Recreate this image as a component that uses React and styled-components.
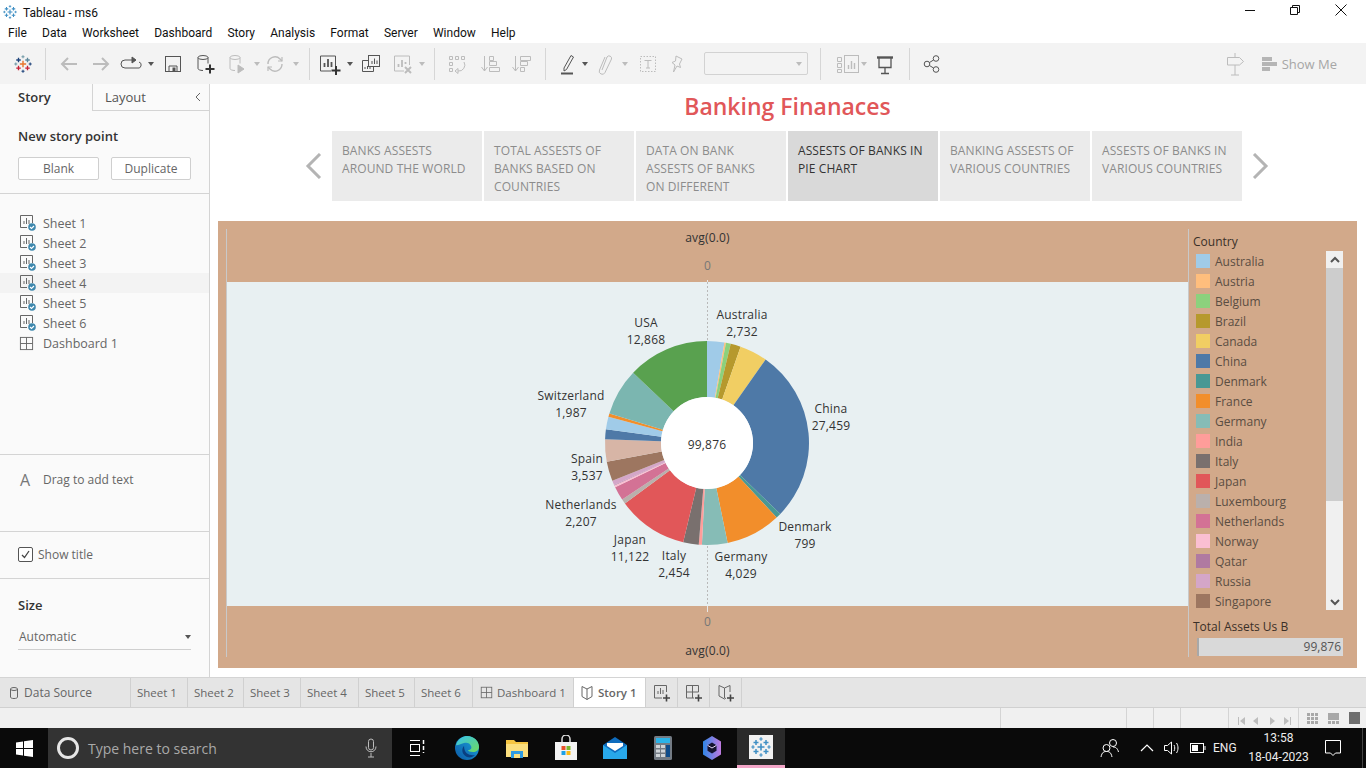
import styled, { createGlobalStyle } from 'styled-components';

const GlobalStyle = createGlobalStyle`
  html, body {
    margin: 0;
    padding: 0;
    width: 1366px;
    height: 768px;
    overflow: hidden;
    background: #fff;
  }
  * { box-sizing: border-box; }
`;

const FONT = '"Open Sans", "Noto Sans", sans-serif';
const WIN_FONT = 'Roboto, "Open Sans", sans-serif';

const SLICES = [
  ['Australia', 2732, '#a0cbe8', true],
  ['Austria', 250, '#ffbe7d', true],
  ['Belgium', 750, '#8cd17d', true],
  ['Brazil', 1600, '#b6992d', true],
  ['Canada', 4400, '#f1ce63', true],
  ['China', 27459, '#4e79a7', true],
  ['Denmark', 799, '#499894', true],
  ['France', 8710, '#f28e2b', true],
  ['Germany', 4029, '#86bcb6', true],
  ['India', 500, '#ff9d9a', true],
  ['Italy', 2454, '#79706e', true],
  ['Japan', 11122, '#e15759', true],
  ['Luxembourg', 750, '#bab0ac', true],
  ['Netherlands', 2207, '#d37295', true],
  ['Norway', 300, '#fabfd2', true],
  ['Qatar', 100, '#b07aa1', true],
  ['Russia', 700, '#d4a6c8', true],
  ['Singapore', 3100, '#9d7660', true],
  ['Spain', 3537, '#d7b5a6', false],
  ['Sweden', 1550, '#4e79a7', false],
  ['Switzerland', 1987, '#a0cbe8', false],
  ['Thailand', 550, '#f28e2b', false],
  ['UK', 7422, '#7bb6b0', false],
  ['USA', 12868, '#59a14f', false],
];

const PIE_LABELS = [
  ['Australia', '2,732', 515, 37],
  ['USA', '12,868', 419, 45],
  ['China', '27,459', 604, 131],
  ['Switzerland', '1,987', 344, 118],
  ['Spain', '3,537', 360, 181],
  ['Netherlands', '2,207', 354, 227],
  ['Japan', '11,122', 403, 262],
  ['Italy', '2,454', 447, 278],
  ['Germany', '4,029', 514, 279],
  ['Denmark', '799', 578, 249],
];

const STORY_POINTS = [
  ['BANKS ASSESTS', 'AROUND THE WORLD'],
  ['TOTAL ASSESTS OF', 'BANKS BASED ON', 'COUNTRIES'],
  ['DATA ON BANK', 'ASSESTS OF BANKS', 'ON DIFFERENT'],
  ['ASSESTS OF BANKS IN', 'PIE CHART'],
  ['BANKING ASSESTS OF', 'VARIOUS COUNTRIES'],
  ['ASSESTS OF BANKS IN', 'VARIOUS COUNTRIES'],
];

const MENU = ['File', 'Data', 'Worksheet', 'Dashboard', 'Story', 'Analysis', 'Format', 'Server', 'Window', 'Help'];
const SHEETS = ['Sheet 1', 'Sheet 2', 'Sheet 3', 'Sheet 4', 'Sheet 5', 'Sheet 6'];
const BOTTOM_SHEETS = [['Sheet 1', 57], ['Sheet 2', 56], ['Sheet 3', 57], ['Sheet 4', 58], ['Sheet 5', 56], ['Sheet 6', 58]];

function polar(r, deg, cx, cy) {
  const a = (deg * Math.PI) / 180;
  return [cx + r * Math.sin(a), cy - r * Math.cos(a)];
}

function arcPath(cx, cy, r0, r1, from, to) {
  const [x1, y1] = polar(r1, from, cx, cy);
  const [x2, y2] = polar(r1, to, cx, cy);
  const [x3, y3] = polar(r0, to, cx, cy);
  const [x4, y4] = polar(r0, from, cx, cy);
  const big = to - from > 180 ? 1 : 0;
  return `M${x1} ${y1}A${r1} ${r1} 0 ${big} 1 ${x2} ${y2}L${x3} ${y3}A${r0} ${r0} 0 ${big} 0 ${x4} ${y4}Z`;
}

function Donut() {
  const total = SLICES.reduce((sum, s) => sum + s[1], 0);
  let at = 0;
  const cx = 480;
  const cy = 161;
  return (
    <PieSvg width="961" height="324" viewBox="0 0 961 324">
      <line x1="480.5" y1="0" x2="480.5" y2="324" stroke="#b9b9b9" strokeDasharray="2 2" />
      {SLICES.map(([name, value, color]) => {
        const from = at;
        at += (value / total) * 360;
        return <path key={name} d={arcPath(cx, cy, 46, 102, from, at)} fill={color} />;
      })}
      <circle cx={cx} cy={cy} r="46" fill="#fff" />
      <text x={cx} y={cy + 6} textAnchor="middle">99,876</text>
      {PIE_LABELS.map(([name, value, x, y]) => (
        <text key={name} x={x} y={y} textAnchor="middle">
          <tspan x={x}>{name}</tspan>
          <tspan x={x} dy="17">{value}</tspan>
        </text>
      ))}
    </PieSvg>
  );
}

function TableauMark({ size = 20, mono }) {
  const c = mono
    ? ['#3f8fc4', '#3f8fc4', '#3f8fc4', '#3f8fc4', '#3f8fc4']
    : ['#e8762d', '#1f447b', '#c72035', '#5b879b', '#7099a6'];
  const cross = (x, y, r, color, w = 1.5) => (
    <path d={`M${x - r} ${y}H${x + r}M${x} ${y - r}V${y + r}`} stroke={color} strokeWidth={w} fill="none" />
  );
  return (
    <svg width={size} height={size} viewBox="0 0 20 20">
      {cross(10, 10, 3.5, c[0], 1.6)}
      {cross(5, 5.5, 2.5, c[1])}
      {cross(15, 14.5, 2.5, c[2])}
      {cross(15, 5.5, 2.5, c[3])}
      {cross(5, 14.5, 2.5, c[2])}
      {cross(10, 2, 1.7, c[4], 1.2)}
      {cross(10, 18, 1.7, c[1], 1.2)}
      {cross(2, 10, 1.7, c[4], 1.2)}
      {cross(18, 10, 1.7, c[1], 1.2)}
    </svg>
  );
}

function Ico({ w = 20, h = 20, off, children }) {
  return (
    <Glyph width={w} height={h} viewBox={`0 0 ${w} ${h}`} $off={off}>
      {children}
    </Glyph>
  );
}

const Plus = ({ x, y }) => <path d={`M${x - 4.5} ${y}H${x + 4.5}M${x} ${y - 4.5}V${y + 4.5}`} stroke="#333" strokeWidth="2" />;

const icons = {
  back: () => <Ico off><path d="M18 10H3M9 4l-6 6 6 6" strokeWidth="2" /></Ico>,
  forward: () => <Ico off><path d="M2 10h15M11 4l6 6-6 6" strokeWidth="2" /></Ico>,
  loop: () => (
    <Ico><path d="M14 6H4a2.5 2.5 0 0 0 0 8h12a2.5 2.5 0 0 0 2-6" /><path d="M11 3l4 3-4 3z" fill="currentColor" /></Ico>
  ),
  save: () => (
    <Ico><rect x="2.5" y="2.5" width="15" height="15" /><path d="M6 17v-5h8v5" /><rect x="10" y="14" width="2" height="3" fill="currentColor" /></Ico>
  ),
  dataAdd: () => (
    <Ico w={22} h={22}>
      <ellipse cx="9" cy="4.5" rx="5" ry="2" />
      <path d="M4 4.5v11c0 1 2 2 5 2M14 4.5v6" />
      <Plus x={16} y={16} />
    </Ico>
  ),
  dataPause: () => (
    <Ico w={22} h={22} off>
      <ellipse cx="9" cy="4.5" rx="5" ry="2" />
      <path d="M4 4.5v11c0 1 2 2 5 2M14 4.5v6" />
      <path d="M12 12l6 4-6 4z" fill="currentColor" />
    </Ico>
  ),
  refresh: () => (
    <Ico off>
      <path d="M3 10a7 7 0 0 1 12-5l2 2M17 10a7 7 0 0 1-12 5l-2-2" strokeWidth="1.4" />
      <path d="M17 3v4h-4M3 17v-4h4" strokeWidth="1.2" />
    </Ico>
  ),
  newSheet: () => (
    <Ico w={24} h={22}>
      <path d="M13 18H2.5V3h15v10" />
      <path d="M6.5 14V10M10 14V6M13.5 14V9" strokeWidth="1.8" />
      <Plus x={18} y={17.5} />
    </Ico>
  ),
  dupSheet: () => (
    <Ico w={20} h={20}>
      <rect x="7.5" y="1.5" width="11" height="11" />
      <path d="M7.5 6.5h-6v11h11v-5" />
      <path d="M11 10V7M13.5 10V4.5M16 10V6.5M4 15v-2M6.5 15v-3M9 15v-2" />
    </Ico>
  ),
  clearSheet: () => (
    <Ico w={22} h={22} off>
      <path d="M12 18H2.5V3h15v9" />
      <path d="M6.5 14v-3M10 14V7M13.5 11V9" strokeWidth="1.8" />
      <path d="M13 14l6 6M19 14l-6 6" strokeWidth="2" />
    </Ico>
  ),
  swap: () => (
    <Ico off>
      <path d="M2.5 2.5h3v3h-3zM8.5 2.5h3v3h-3zM14.5 2.5h3v3h-3zM2.5 8.5h3v3h-3zM2.5 14.5h3v3h-3z" />
      <path d="M17 8a6 6 0 0 1-6 9M8 17l3 2.5v-5z" />
    </Ico>
  ),
  sortUp: () => (
    <Ico off>
      <path d="M4.5 2v15M1.5 13l3 4 3-4" />
      <path d="M9.5 2.5h4v4h-4zM9.5 7.5h7v4h-7zM9.5 13.5h10v4h-10z" />
    </Ico>
  ),
  sortDown: () => (
    <Ico off>
      <path d="M4.5 2v15M1.5 13l3 4 3-4" />
      <path d="M9.5 2.5h10v4h-10zM9.5 7.5h7v4h-7zM9.5 13.5h4v4h-4z" />
    </Ico>
  ),
  pen: () => (
    <Ico w={18} h={22}>
      <path d="M5 15L12 2.5l2.5 1.5L7.5 16.5 5 18z" />
      <path d="M2 20.5h12" strokeWidth="2" />
    </Ico>
  ),
  clip: () => (
    <Ico w={18} h={22} off>
      <path d="M6 17L11 4a2.5 2.5 0 0 1 4.5 2L9 19.5a3 3 0 0 1-5.5-2.5L9 4" />
    </Ico>
  ),
  textBox: () => (
    <Ico w={20} h={20} off>
      <rect x="2.5" y="2.5" width="15" height="15" strokeDasharray="1.5 1.5" />
      <path d="M6.5 6.5h7M10 6.5V14M8 14h4" />
    </Ico>
  ),
  pin: () => (
    <Ico w={18} h={22} off><path d="M8 3l6 3-2.5 5 1 3.5L9 13l-3.5 6 1.5-7L4 9.5l3.5-1.5z" /></Ico>
  ),
  labels: () => (
    <Ico w={26} h={22} off>
      <path d="M2.5 4.5h4v4h-4zM2.5 10.5h4v4h-4zM2.5 16.5h4v3h-4z" />
      <rect x="9.5" y="2.5" width="14" height="17" />
      <path d="M13.5 16v-4M16.5 16V8M19.5 16v-6" strokeWidth="1.4" />
    </Ico>
  ),
  screen: () => (
    <Ico w={20} h={22}>
      <path d="M2 4.5h16" strokeWidth="2.4" />
      <path d="M4 4.5v10h12v-10M10 14.5V20M6 20.5h8" strokeWidth="1.3" />
    </Ico>
  ),
  share: () => (
    <Ico w={18} h={20}>
      <circle cx="4" cy="10" r="2.8" /><circle cx="13" cy="4.5" r="2.8" /><circle cx="13" cy="15.5" r="2.8" />
      <path d="M6.5 8.5l4-2.5M6.5 11.5l4 2.5" />
    </Ico>
  ),
  sign: () => (
    <Ico w={20} h={24} off>
      <path d="M10 1v4M10 13v10M6 23h8" />
      <path d="M2.5 5.5h12l4 4-4 3.5h-12z" />
    </Ico>
  ),
};

const ToolIcon = ({ name }) => icons[name]();

const TOOLBAR = [
  { kind: 'logo', w: 30 },
  { kind: 'sep', l: 7, r: 7 },
  { icon: 'back', w: 32 },
  { icon: 'forward', w: 32 },
  { icon: 'loop', w: 28 },
  { kind: 'caret', w: 12 },
  { icon: 'save', w: 32 },
  { icon: 'dataAdd', w: 32 },
  { icon: 'dataPause', w: 32 },
  { kind: 'caret', w: 8, off: true },
  { icon: 'refresh', w: 28 },
  { kind: 'caret', w: 14, off: true },
  { kind: 'sep', l: 6, r: 4 },
  { icon: 'newSheet', w: 32 },
  { kind: 'caret', w: 8 },
  { icon: 'dupSheet', w: 34 },
  { icon: 'clearSheet', w: 30 },
  { kind: 'caret', w: 8, off: true },
  { kind: 'sep', l: 8, r: 6 },
  { icon: 'swap', w: 32 },
  { icon: 'sortUp', w: 34 },
  { icon: 'sortDown', w: 28 },
  { kind: 'sep', l: 10, r: 9 },
  { icon: 'pen', w: 26 },
  { kind: 'caret', w: 8 },
  { icon: 'clip', w: 32 },
  { kind: 'caret', w: 8, off: true },
  { icon: 'textBox', w: 38 },
  { icon: 'pin', w: 20 },
  { kind: 'select' },
  { kind: 'sep', l: 12, r: 12 },
  { icon: 'labels', w: 30 },
  { kind: 'caret', w: 2, off: true },
  { icon: 'screen', w: 40 },
  { kind: 'sep', l: 4, r: 8 },
  { icon: 'share', w: 28 },
];

function Toolbar() {
  return (
    <ToolbarRow>
      {TOOLBAR.map((item, i) => {
        if (item.kind === 'sep') return <ToolSep key={i} $l={item.l} $r={item.r} />;
        if (item.kind === 'select') return <FitSelect key={i}><Caret $off /></FitSelect>;
        if (item.kind === 'caret') return <Slot key={i} $w={item.w}><Caret $off={item.off} /></Slot>;
        if (item.kind === 'logo') return <Slot key={i} $w={item.w}><TableauMark size={18} /></Slot>;
        return <Slot key={i} $w={item.w}><ToolIcon name={item.icon} /></Slot>;
      })}
      <RightTools>
        <ToolIcon name="sign" />
        <ShowMe>
          <ShowMeBars><i /><i /><i /></ShowMeBars>
          Show Me
        </ShowMe>
      </RightTools>
    </ToolbarRow>
  );
}

function SheetIcon() {
  return (
    <svg width="18" height="18" viewBox="0 0 18 18" fill="none">
      <path d="M13.5 9V1.5h-12v12H8" stroke="#666" />
      <path d="M5 10V7M7.5 10V4M10 10V6" stroke="#666" />
      <circle cx="13" cy="13" r="3.8" fill="#3d87ad" />
      <path d="M11 13l1.5 1.5 2.5-2.5" stroke="#fff" strokeWidth="1.1" />
    </svg>
  );
}

function DashIcon({ size = 15 }) {
  return (
    <svg width={size} height={size} viewBox="0 0 16 16" fill="none" stroke="#666">
      <rect x="1.5" y="1.5" width="13" height="13" />
      <path d="M1.5 8h13M8 1.5v13" />
    </svg>
  );
}

function Sidebar() {
  return (
    <Side>
      <SideTabs>
        <SideTab $active>Story</SideTab>
        <SideTab>
          Layout
          <svg width="8" height="10" viewBox="0 0 8 10" fill="none" stroke="#666"><path d="M6 1L2 5l4 4" /></svg>
        </SideTab>
      </SideTabs>
      <NewPoint>
        <SideHead>New story point</SideHead>
        <PointButtons>
          <PointButton $w={81}>Blank</PointButton>
          <PointButton $w={80}>Duplicate</PointButton>
        </PointButtons>
      </NewPoint>
      <SheetList>
        {SHEETS.map((s) => (
          <SheetRow key={s} $hover={s === 'Sheet 4'}>
            <RowIcon><SheetIcon /></RowIcon>
            {s}
          </SheetRow>
        ))}
        <SheetRow>
          <RowIcon><DashIcon /></RowIcon>
          Dashboard 1
        </SheetRow>
      </SheetList>
      <DragText>
        <BigA>A</BigA>
        Drag to add text
      </DragText>
      <TitleCheck>
        <CheckBox>
          <svg width="11" height="11" viewBox="0 0 11 11" fill="none" stroke="#444" strokeWidth="1.3"><path d="M2 6l2.5 2.5L9 2" /></svg>
        </CheckBox>
        Show title
      </TitleCheck>
      <SizeBlock>
        <SideHead>Size</SideHead>
        <SizeSelect>
          Automatic
          <Caret />
        </SizeSelect>
      </SizeBlock>
    </Side>
  );
}

function Chevron({ flip }) {
  return (
    <ChevronBox>
      <svg width="18" height="26" viewBox="0 0 18 26" fill="none" stroke="#b4b4b4" strokeWidth="3">
        <path d={flip ? 'M3 1l12 12L3 25' : 'M15 1L3 13l12 12'} />
      </svg>
    </ChevronBox>
  );
}

function Legend() {
  return (
    <LegendCol>
      <LegendTitle>Country</LegendTitle>
      <LegendBody>
        <LegendList>
          {SLICES.filter((s) => s[3]).map(([name, , color]) => (
            <LegendRow key={name}>
              <Swatch $c={color} />
              {name}
            </LegendRow>
          ))}
        </LegendList>
        <ScrollTrack>
          <ScrollBtn>
            <svg width="10" height="8" viewBox="0 0 10 8" fill="none" stroke="#555" strokeWidth="2"><path d="M1 6l4-4 4 4" /></svg>
          </ScrollBtn>
          <ScrollThumb />
          <ScrollBtn $end>
            <svg width="10" height="8" viewBox="0 0 10 8" fill="none" stroke="#555" strokeWidth="2"><path d="M1 2l4 4 4-4" /></svg>
          </ScrollBtn>
        </ScrollTrack>
      </LegendBody>
      <LegendTitle $tight>Total Assets Us B</LegendTitle>
      <TotalBar>99,876</TotalBar>
    </LegendCol>
  );
}

function StoryArea() {
  return (
    <MainArea>
      <StoryTitle>Banking Finanaces</StoryTitle>
      <StoryNav>
        <Chevron />
        <PointRow>
          {STORY_POINTS.map((lines, i) => (
            <Point key={i} $active={i === 3}>
              {lines.map((line) => <PointLine key={line}>{line}</PointLine>)}
            </Point>
          ))}
        </PointRow>
        <Chevron flip />
      </StoryNav>
      <Dash>
        <ChartCol>
          <AxisBand $top>
            <AxisTitle>avg(0.0)</AxisTitle>
            <AxisZero $top>0</AxisZero>
            <AxisTick />
          </AxisBand>
          <Plot><Donut /></Plot>
          <AxisBand>
            <AxisTick />
            <AxisZero>0</AxisZero>
            <AxisTitle>avg(0.0)</AxisTitle>
          </AxisBand>
        </ChartCol>
        <Legend />
      </Dash>
    </MainArea>
  );
}

function BookIcon() {
  return (
    <svg width="14" height="16" viewBox="0 0 14 16" fill="none" stroke="#666">
      <path d="M7 4L2 1.5v10L7 14.5l5-3v-10zM7 4v10.5" />
    </svg>
  );
}

function NewTabIcon({ kind }) {
  return (
    <svg width="20" height="20" viewBox="0 0 20 20" fill="none" stroke="#666">
      {kind === 'sheet' && <path d="M10 15H2.5V2.5h12V9M6 11V8M8.5 11V5M11 11V7" />}
      {kind === 'dash' && <path d="M10 15H2.5V2.5h12V9M2.5 9h12M8.5 2.5V15" />}
      {kind === 'story' && <path d="M8.5 5L3 2.5V13l5.5 3 1.5-1M8.5 5v10M8.5 5L14 2.5V9" />}
      <path d="M11 15h7M14.5 11.5v7" stroke="#444" strokeWidth="1.6" />
    </svg>
  );
}

function TabStrip() {
  return (
    <Tabs>
      <Tab $w={131} $pad={9}>
        <svg width="10" height="14" viewBox="0 0 10 14" fill="none" stroke="#666">
          <ellipse cx="5" cy="3" rx="3.5" ry="1.5" />
          <path d="M1.5 3v8c0 1 1.5 1.5 3.5 1.5S8.5 12 8.5 11V3" />
        </svg>
        <DataSourceLabel>Data Source</DataSourceLabel>
      </Tab>
      {BOTTOM_SHEETS.map(([s, w]) => (
        <Tab key={s} $w={w} $pad={6}>{s}</Tab>
      ))}
      <Tab $w={101} $pad={7}>
        <DashIcon size={13} />
        Dashboard 1
      </Tab>
      <Tab $w={72} $pad={6} $active>
        <BookIcon />
        Story 1
      </Tab>
      <Tab $w={32} $center><NewTabIcon kind="sheet" /></Tab>
      <Tab $w={32} $center><NewTabIcon kind="dash" /></Tab>
      <Tab $w={32} $center><NewTabIcon kind="story" /></Tab>
    </Tabs>
  );
}

function StatusBar() {
  return (
    <Status>
      <StatusCell $w={126} />
      <StatusCell $w={27} />
      <StatusCell $w={27} />
      <StatusCell $w={48} />
      <StatusCell $w={70}>
        <PageNav>
          <svg width="58" height="10" viewBox="0 0 58 10" fill="#bdbdbd">
            <path d="M1 1h1v8H1zM8 1v8L3 5zM21 1v8l-5-4zM33 1v8l5-4zM47 1v8l5-4zM53 1h1v8h-1z" />
          </svg>
        </PageNav>
      </StatusCell>
      <StatusViews>
        <svg width="11" height="11" viewBox="0 0 11 11" fill="#a8a8a8">
          <path d="M0 0h3v3H0zM4 0h3v3H4zM8 0h3v3H8zM0 4h3v3H0zM4 4h3v3H4zM8 4h3v3H8zM0 8h3v3H0zM4 8h3v3H4zM8 8h3v3H8z" />
        </svg>
        <svg width="11" height="11" viewBox="0 0 11 11" fill="#a8a8a8">
          <path d="M0 0h11v7H0zM0 8h3v3H0zM4 8h3v3H4zM8 8h3v3H8z" />
        </svg>
        <svg width="11" height="12" viewBox="0 0 11 12" fill="#6e6e6e"><path d="M0 0h11v12H0z" /></svg>
      </StatusViews>
    </Status>
  );
}

const TASK_ICONS = {
  view: (
    <svg width="16" height="18" viewBox="0 0 16 18" fill="none" stroke="#fff">
      <path d="M1 1.5h10M1 16.5h10" />
      <rect x="1.5" y="5.5" width="9" height="7" />
      <path d="M14.5 1v4M14.5 7v4M14.5 13v1" strokeWidth="1.5" />
    </svg>
  ),
  edge: (
    <svg width="26" height="26" viewBox="0 0 26 26">
      <defs>
        <linearGradient id="edgeA" x1="0" y1="1" x2="1" y2="0">
          <stop offset="0" stopColor="#0c59a4" />
          <stop offset="1" stopColor="#1ba5df" />
        </linearGradient>
        <linearGradient id="edgeB" x1="0" y1="0" x2="1" y2="1">
          <stop offset="0" stopColor="#35c1f1" />
          <stop offset="1" stopColor="#6fdc5c" />
        </linearGradient>
      </defs>
      <circle cx="13" cy="13" r="12" fill="url(#edgeA)" />
      <path d="M2 10C4 3 10 1 13 1c7 0 12 5 12 11 0 3-3 5-6 5s-5-1-5-2c3 0 4-2 3-4-1-3-4-4-7-3-4 1-7 3-8 2z" fill="url(#edgeB)" />
      <path d="M10 11c-3 3-2 9 3 11 3 1 6 0 8-2-5 1-11-1-11-9z" fill="#0a3f80" />
    </svg>
  ),
  folder: (
    <svg width="24" height="22" viewBox="0 0 24 22">
      <path d="M1 3h8l2 2h12v15H1z" fill="#f5c542" />
      <path d="M1 7h22v13H1z" fill="#fbdf7e" />
      <path d="M6 14h12v7H6z" fill="#2f9be0" />
      <path d="M9 17h6v4H9z" fill="#fbdf7e" />
    </svg>
  ),
  store: (
    <svg width="24" height="26" viewBox="0 0 24 26">
      <path d="M8 7V4a4 4 0 0 1 8 0v3" fill="none" stroke="#ddd" strokeWidth="1.5" />
      <path d="M1 7h22v18H1z" fill="#f3f3f3" />
      <path d="M7.5 11h4v4h-4z" fill="#e8512a" />
      <path d="M12.5 11h4v4h-4z" fill="#7cb82f" />
      <path d="M7.5 16h4v4h-4z" fill="#1ea1e6" />
      <path d="M12.5 16h4v4h-4z" fill="#fab915" />
    </svg>
  ),
  mail: (
    <svg width="26" height="24" viewBox="0 0 26 24">
      <path d="M1 9L13 1l12 8v14H1z" fill="#0f6cbd" />
      <path d="M1 9l12 8 12-8v14H1z" fill="#28a8ea" />
      <path d="M5 7h16v3l-8 5-8-5z" fill="#fff" />
    </svg>
  ),
  calc: (
    <svg width="20" height="26" viewBox="0 0 20 26">
      <rect x="1" y="1" width="18" height="24" rx="1.5" fill="#737b84" />
      <rect x="3" y="3" width="14" height="5" fill="#2bb3e8" />
      <path d="M3 10h4v3H3zM8 10h4v3H8zM3 14.5h4v3H3zM8 14.5h4v3H8zM3 19h4v3H3zM8 19h4v3H8z" fill="#cfd4d8" />
      <path d="M13 10h4v12h-4z" fill="#0f4c8a" />
    </svg>
  ),
  hex: (
    <svg width="22" height="26" viewBox="0 0 22 26">
      <defs>
        <linearGradient id="hexA" x1="0" y1="0" x2="1" y2="0">
          <stop offset="0" stopColor="#2f86e6" />
          <stop offset="1" stopColor="#c07be0" />
        </linearGradient>
      </defs>
      <path d="M11 1l9 5.5v13L11 25l-9-5.5v-13z" fill="url(#hexA)" />
      <path d="M11 7.5l4.5 2.8v5.4L11 18.5l-4.5-2.8v-5.4z" fill="#14142e" />
      <path d="M6.5 10.3L11 13l4.5-2.7" fill="none" stroke="#e7d9f7" />
    </svg>
  ),
};

function Taskbar() {
  return (
    <Task>
      <StartBtn>
        <svg width="17" height="17" viewBox="0 0 17 17" fill="#fff">
          <path d="M0 2.5l7-1V8H0zM8 1.3L17 0v8H8zM0 9h7v6.500l-7-1zM8 9h9v8l-9-1.300z" />
        </svg>
      </StartBtn>
      <SearchBox>
        <CortanaRing />
        <SearchText>Type here to search</SearchText>
        <svg width="12" height="20" viewBox="0 0 12 20" fill="none" stroke="#bdbdbd">
          <rect x="3.5" y="1" width="5" height="11" rx="2.5" />
          <path d="M1 8.5c0 7 10 7 10 0M6 15v4M3 19h6" />
        </svg>
      </SearchBox>
      <TaskApp $w={50}>{TASK_ICONS.view}</TaskApp>
      <TaskApp $w={50}>{TASK_ICONS.edge}</TaskApp>
      <TaskApp $w={49}>{TASK_ICONS.folder}</TaskApp>
      <TaskApp $w={49}>{TASK_ICONS.store}</TaskApp>
      <TaskApp $w={49}>{TASK_ICONS.mail}</TaskApp>
      <TaskApp $w={48}>{TASK_ICONS.calc}</TaskApp>
      <TaskApp $w={50}>{TASK_ICONS.hex}</TaskApp>
      <ActiveApp>
        <AppTile><TableauMark size={20} mono /></AppTile>
      </ActiveApp>
      <Tray>
        <svg width="20" height="22" viewBox="0 0 20 22" fill="none" stroke="#fff">
          <circle cx="13" cy="6" r="3.5" />
          <circle cx="6.5" cy="11" r="3.5" />
          <path d="M1 20c1-5 3-5.5 5.5-5.5S11 15 12 20M13 10c2.5 0 4.5 1 5.5 5" />
        </svg>
        <TrayArrow>
          <svg width="14" height="8" viewBox="0 0 14 8" fill="none" stroke="#fff" strokeWidth="1.2"><path d="M1 7l6-6 6 6" /></svg>
        </TrayArrow>
        <svg width="18" height="16" viewBox="0 0 18 16" fill="none" stroke="#fff">
          <path d="M1.5 5.5h3L8.5 2v12l-4-3.5h-3z" />
          <path d="M11 5c1 2 1 4 0 6M13.5 3c2 3 2 7 0 10" />
        </svg>
        <svg width="16" height="10" viewBox="0 0 16 10" fill="none" stroke="#fff">
          <rect x="0.5" y="0.5" width="13" height="9" />
          <rect x="2" y="2" width="6" height="6" fill="#fff" stroke="none" />
          <path d="M15 3v4" />
        </svg>
        <TrayText>ENG</TrayText>
        <Clock>
          <span>13:58</span>
          <span>18-04-2023</span>
        </Clock>
        <svg width="18" height="18" viewBox="0 0 18 18" fill="none" stroke="#fff">
          <path d="M1.5 1.5h15V14h-5L9 16.5 6.5 14h-5z" />
        </svg>
        <ShowDesktop />
      </Tray>
    </Task>
  );
}

export default function App() {
  return (
    <>
      <GlobalStyle />
      <Window>
        <TitleBar>
          <TitleIcon><TableauMark size={14} mono /></TitleIcon>
          <WinTitle>Tableau - ms6</WinTitle>
          <WinControls>
            <svg width="10" height="10" viewBox="0 0 10 10" stroke="#111"><path d="M0 5.5h10" /></svg>
            <svg width="12" height="12" viewBox="0 0 12 12" fill="none" stroke="#111"><path d="M1.5 3.5h7v7h-7zM3.5 3.5v-2h7v7h-2" /></svg>
            <svg width="12" height="12" viewBox="0 0 12 12" fill="none" stroke="#111"><path d="M.5.5l11 11M11.500.5l-11 11" /></svg>
          </WinControls>
        </TitleBar>
        <MenuBar>
          {MENU.map((m) => <MenuItem key={m}>{m}</MenuItem>)}
        </MenuBar>
        <Toolbar />
        <Workspace>
          <Sidebar />
          <StoryArea />
        </Workspace>
        <TabStrip />
        <StatusBar />
        <Taskbar />
      </Window>
    </>
  );
}

const Window = styled.div`
  width: 1366px;
  height: 768px;
  display: flex;
  flex-direction: column;
  font-family: ${FONT};
  font-size: 12px;
  color: #555;
  overflow: hidden;
`;

const TitleBar = styled.div`
  height: 22px;
  display: flex;
  align-items: center;
  padding-left: 3px;
  background: #fff;
`;

const TitleIcon = styled.div`
  width: 14px;
  height: 14px;
  margin-top: 1px;
`;

const WinTitle = styled.div`
  margin: 3px 0 0 6px;
  font-family: ${WIN_FONT};
  font-size: 12px;
  color: #111;
`;

const WinControls = styled.div`
  margin-left: auto;
  width: 102px;
  margin-right: 19px;
  display: flex;
  align-items: center;
  justify-content: space-between;
  margin-top: -2px;
`;

const MenuBar = styled.div`
  height: 21px;
  display: flex;
  align-items: center;
  gap: 15.2px;
  padding-left: 8px;
  background: #fff;
`;

const MenuItem = styled.span`
  font-family: ${WIN_FONT};
  font-size: 12px;
  color: #111;
`;

const ToolbarRow = styled.div`
  height: 41px;
  display: flex;
  align-items: center;
  padding-left: 8px;
  background: #f3f3f3;
`;

const Slot = styled.div`
  width: ${(p) => p.$w}px;
  height: 24px;
  flex: none;
  display: flex;
  align-items: center;
  justify-content: center;
`;

const Glyph = styled.svg`
  fill: none;
  stroke: currentColor;
  color: ${(p) => (p.$off ? '#bcbcbc' : '#555')};
  overflow: visible;
  flex: none;
`;

const ToolSep = styled.div`
  width: 1px;
  height: 32px;
  flex: none;
  background: #d6d6d6;
  margin: 0 ${(p) => p.$r}px 0 ${(p) => p.$l}px;
`;

const Caret = styled.span`
  display: inline-block;
  flex: none;
  width: 0;
  height: 0;
  border-left: 3.5px solid transparent;
  border-right: 3.5px solid transparent;
  border-top: 4px solid ${(p) => (p.$off ? '#bcbcbc' : '#555')};
`;

const FitSelect = styled.div`
  width: 104px;
  height: 23px;
  flex: none;
  margin-left: 17px;
  display: flex;
  align-items: center;
  justify-content: flex-end;
  padding-right: 5px;
  border: 1px solid #d2d2d2;
  border-radius: 2px;
`;

const RightTools = styled.div`
  margin-left: auto;
  padding-right: 29px;
  display: flex;
  align-items: center;
  gap: 17px;
`;

const ShowMe = styled.div`
  display: flex;
  align-items: center;
  gap: 5px;
  font-size: 13px;
  color: #a6a6a6;
`;

const ShowMeBars = styled.div`
  display: flex;
  flex-direction: column;
  gap: 1px;
  i {
    display: block;
    height: 4px;
    background: #b5b5b5;
  }
  i:nth-child(1) { width: 10px; }
  i:nth-child(2) { width: 15px; }
  i:nth-child(3) { width: 8px; }
`;

const Workspace = styled.div`
  height: 593px;
  display: flex;
  background: #fff;
`;

const Side = styled.aside`
  width: 210px;
  flex: none;
  display: flex;
  flex-direction: column;
  background: #fafafa;
  border-right: 1px solid #d4d4d4;
`;

const SideTabs = styled.div`
  height: 27px;
  display: flex;
`;

const SideTab = styled.div`
  width: ${(p) => (p.$active ? '92px' : 'auto')};
  flex: ${(p) => (p.$active ? 'none' : '1')};
  display: flex;
  align-items: center;
  justify-content: space-between;
  padding: 0 7px 1px ${(p) => (p.$active ? '18px' : '12px')};
  font-size: 13px;
  font-weight: ${(p) => (p.$active ? 600 : 400)};
  color: ${(p) => (p.$active ? '#333' : '#555')};
  border-left: ${(p) => (p.$active ? 'none' : '1px solid #d4d4d4')};
  border-bottom: ${(p) => (p.$active ? 'none' : '1px solid #d4d4d4')};
`;

const NewPoint = styled.div`
  height: 83px;
  flex: none;
  padding: 16px 18px 0;
  border-bottom: 1px solid #d4d4d4;
`;

const SideHead = styled.div`
  height: 18px;
  line-height: 18px;
  font-size: 13px;
  font-weight: 600;
  color: #333;
`;

const PointButtons = styled.div`
  display: flex;
  gap: 12px;
  margin-top: 12px;
`;

const PointButton = styled.div`
  width: ${(p) => p.$w}px;
  height: 23px;
  display: flex;
  align-items: center;
  justify-content: center;
  background: #fff;
  border: 1px solid #cfcfcf;
  border-radius: 2px;
  font-size: 12px;
  color: #666;
`;

const SheetList = styled.div`
  height: 261px;
  flex: none;
  padding-top: 19px;
  border-bottom: 1px solid #d4d4d4;
`;

const SheetRow = styled.div`
  height: 20px;
  display: flex;
  align-items: center;
  padding-left: 19px;
  font-size: 12.5px;
  color: #666;
  background: ${(p) => (p.$hover ? '#f3f3f3' : 'transparent')};
`;

const RowIcon = styled.span`
  width: 24px;
  flex: none;
  display: flex;
  align-items: center;
`;

const DragText = styled.div`
  height: 77px;
  flex: none;
  display: flex;
  align-items: flex-start;
  padding: 16px 0 0 20px;
  font-size: 12px;
  color: #666;
  border-bottom: 1px solid #d4d4d4;
`;

const BigA = styled.span`
  width: 23px;
  font-size: 16px;
  line-height: 19px;
  color: #777;
`;

const TitleCheck = styled.div`
  height: 47px;
  flex: none;
  display: flex;
  align-items: center;
  gap: 5px;
  padding: 0 0 2px 18px;
  font-size: 12px;
  color: #666;
  border-bottom: 1px solid #d4d4d4;
`;

const CheckBox = styled.div`
  width: 15px;
  height: 15px;
  display: flex;
  align-items: center;
  justify-content: center;
  background: #fff;
  border: 1px solid #555;
  border-radius: 2px;
`;

const SizeBlock = styled.div`
  padding: 17px 18px 0;
`;

const SizeSelect = styled.div`
  height: 26px;
  margin-top: 10px;
  display: flex;
  align-items: center;
  justify-content: space-between;
  padding: 0 0 0 1px;
  font-size: 12px;
  color: #666;
  border-bottom: 1px solid #cfcfcf;
`;

const MainArea = styled.main`
  flex: 1;
  min-width: 0;
  display: flex;
  flex-direction: column;
  padding: 0 9px 9px 8px;
`;

const StoryTitle = styled.h1`
  height: 47px;
  margin: 0;
  padding-top: 5px;
  text-align: center;
  font-size: 23px;
  line-height: 34px;
  font-weight: 600;
  color: #e15759;
`;

const StoryNav = styled.div`
  height: 70px;
  display: flex;
  align-items: center;
  justify-content: center;
  padding-right: 1px;
  gap: 6px;
`;

const ChevronBox = styled.div`
  width: 18px;
  height: 26px;
  flex: none;
`;

const PointRow = styled.div`
  display: flex;
  gap: 2px;
  padding: 0 3px;
`;

const Point = styled.div`
  width: 150px;
  height: 70px;
  padding: 11px 6px 0 10px;
  font-size: 12px;
  line-height: 18px;
  letter-spacing: 0.1px;
  white-space: nowrap;
  background: ${(p) => (p.$active ? '#d9d9d9' : '#ebebeb')};
  color: ${(p) => (p.$active ? '#333' : '#8c8c8c')};
`;

const PointLine = styled.div`
  height: 18px;
`;

const Dash = styled.section`
  height: 447px;
  margin-top: 20px;
  padding: 8px 0 11px 8px;
  display: flex;
  background: #d2a98a;
`;

const ChartCol = styled.div`
  width: 962px;
  flex: none;
  display: flex;
  flex-direction: column;
  border-left: 1px solid #c9c9c9;
`;

const AxisBand = styled.div`
  height: ${(p) => (p.$top ? '53px' : '51px')};
  display: flex;
  flex-direction: column;
  align-items: center;
  padding: ${(p) => (p.$top ? '1px' : '0')} 0 0 0;
`;

const AxisTitle = styled.div`
  height: 16px;
  line-height: 16px;
  font-size: 12px;
  letter-spacing: 0.2px;
  color: #333;
`;

const AxisZero = styled.div`
  height: 16px;
  line-height: 16px;
  margin: ${(p) => (p.$top ? '12px 0 6px' : '2px 0 13px')};
  font-size: 12px;
  color: #777;
`;

const AxisTick = styled.div`
  width: 1px;
  height: 6px;
  flex: none;
  background: #e9e9e9;
`;

const Plot = styled.div`
  width: 961px;
  height: 324px;
  background: #e8f0f2;
`;

const PieSvg = styled.svg`
  display: block;
  font-family: ${FONT};
  font-size: 12px;
  letter-spacing: 0.2px;
  fill: #333;
`;

const LegendCol = styled.div`
  flex: 1;
  padding: 4px 0 0 4px;
  display: flex;
  flex-direction: column;
  border-left: 1px solid #c9c9c9;
`;

const LegendTitle = styled.div`
  height: 18px;
  line-height: 18px;
  font-size: 12px;
  font-weight: 500;
  color: #3a3028;
  margin-top: ${(p) => (p.$tight ? '8px' : '0')};
`;

const LegendBody = styled.div`
  height: 359px;
  display: flex;
`;

const LegendList = styled.div`
  width: 133px;
  flex: none;
  overflow: hidden;
  padding-left: 3px;
`;

const LegendRow = styled.div`
  height: 20px;
  display: flex;
  align-items: center;
  gap: 5px;
  font-size: 12px;
  color: #5a4d42;
`;

const Swatch = styled.span`
  width: 14px;
  height: 14px;
  flex: none;
  background: ${(p) => p.$c};
`;

const ScrollTrack = styled.div`
  width: 17px;
  flex: none;
  display: flex;
  flex-direction: column;
  background: #f0f0f0;
`;

const ScrollBtn = styled.div`
  height: 17px;
  flex: none;
  display: flex;
  align-items: center;
  justify-content: center;
  margin-top: ${(p) => (p.$end ? 'auto' : '0')};
`;

const ScrollThumb = styled.div`
  height: 233px;
  flex: none;
  background: #cdcdcd;
`;

const TotalBar = styled.div`
  width: 146px;
  height: 18px;
  margin: 2px 0 0 4px;
  padding-right: 2px;
  text-align: right;
  line-height: 18px;
  font-size: 12px;
  color: #555;
  background: #d9d9d9;
  border-left: 2px solid #a8a8a8;
`;

const Tabs = styled.div`
  height: 31px;
  display: flex;
  background: #e5e5e5;
  border-top: 1px solid #d4d4d4;
  border-bottom: 1px solid #d0d0d0;
`;

const Tab = styled.div`
  width: ${(p) => p.$w}px;
  flex: none;
  display: flex;
  align-items: center;
  gap: 4px;
  justify-content: ${(p) => (p.$center ? 'center' : 'flex-start')};
  padding-left: ${(p) => (p.$pad ? `${p.$pad}px` : '0')};
  font-size: 11.5px;
  font-weight: ${(p) => (p.$active ? 600 : 400)};
  color: #666;
  background: ${(p) => (p.$active ? '#fff' : 'transparent')};
  border-right: 1px solid #d0d0d0;
`;

const DataSourceLabel = styled.span`
  font-size: 12px;
  margin-left: 1px;
`;

const Status = styled.div`
  height: 20px;
  display: flex;
  padding-left: 1000px;
  background: #f0f0f0;
`;

const StatusCell = styled.div`
  width: ${(p) => p.$w}px;
  flex: none;
  border-left: 1px solid #d4d4d4;
`;

const PageNav = styled.div`
  padding: 5px 0 0 8px;
`;

const StatusViews = styled.div`
  flex: 1;
  display: flex;
  align-items: center;
  gap: 10px;
  padding-left: 8px;
  border-left: 1px solid #d4d4d4;
`;

const Task = styled.div`
  height: 40px;
  display: flex;
  align-items: center;
  background: #0a0a0a;
`;

const StartBtn = styled.div`
  width: 48px;
  flex: none;
  display: flex;
  justify-content: center;
`;

const SearchBox = styled.div`
  width: 344px;
  height: 40px;
  flex: none;
  display: flex;
  align-items: center;
  padding: 0 15px 0 9px;
  background: #333;
`;

const CortanaRing = styled.div`
  width: 22px;
  height: 22px;
  flex: none;
  border: 3px solid #e6e6e6;
  border-radius: 50%;
`;

const SearchText = styled.div`
  flex: 1;
  margin-left: 9px;
  font-size: 14px;
  color: #a9a9a9;
`;

const TaskApp = styled.div`
  width: ${(p) => p.$w}px;
  flex: none;
  display: flex;
  justify-content: center;
`;

const ActiveApp = styled.div`
  width: 48px;
  height: 40px;
  flex: none;
  display: flex;
  align-items: center;
  justify-content: center;
  background: #2a2a2a;
  border-bottom: 3px solid #f3a6c8;
`;

const AppTile = styled.div`
  width: 24px;
  height: 24px;
  display: flex;
  align-items: center;
  justify-content: center;
  background: #f2f2f2;
`;

const Tray = styled.div`
  flex: 1;
  height: 40px;
  display: flex;
  align-items: center;
  padding-left: 315px;
  color: #fff;
  gap: 9px;
`;

const TrayArrow = styled.div`
  margin-left: 11px;
  display: flex;
`;

const TrayText = styled.div`
  margin-left: -2px;
  font-family: ${WIN_FONT};
  font-size: 12px;
  color: #eee;
`;

const Clock = styled.div`
  width: 66px;
  margin-right: 3px;
  display: flex;
  flex-direction: column;
  align-items: center;
  gap: 2px;
  font-family: ${WIN_FONT};
  font-size: 12px;
  line-height: 17px;
  color: #eee;
`;

const ShowDesktop = styled.div`
  width: 1px;
  height: 40px;
  margin-left: 11px;
  background: #444;
`;
